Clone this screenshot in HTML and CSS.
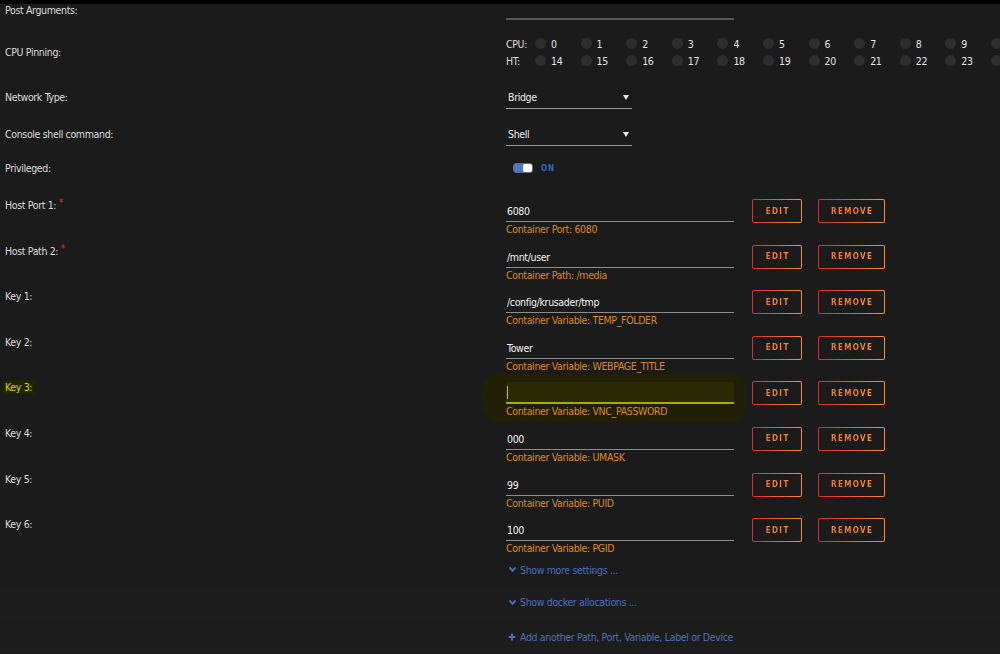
FILE: index.html
```html
<!DOCTYPE html>
<html lang="en">
<head>
    <meta charset="UTF-8">
    <meta name="viewport" content="width=device-width, initial-scale=1.0">
    <title>Container Settings</title>
    <link rel="stylesheet" href="styles.css">
</head>
<body>
    <div class="topbar"></div>
    <form class="settings">
        <div class="row row-post">
            <div class="label">Post Arguments:</div>
            <div class="field wide"><div class="post-input"></div></div>
        </div>

        <div class="row row-cpu">
            <div class="label">CPU Pinning:</div>
            <div class="field wide">
                <div class="cpu-line">
                    <span class="cpu-tag">CPU:</span>
                    <span class="core"><i></i>0</span><span class="core"><i></i>1</span><span class="core"><i></i>2</span><span class="core"><i></i>3</span><span class="core"><i></i>4</span><span class="core"><i></i>5</span><span class="core"><i></i>6</span><span class="core"><i></i>7</span><span class="core"><i></i>8</span><span class="core"><i></i>9</span><span class="core"><i></i></span>
                </div>
                <div class="cpu-line">
                    <span class="cpu-tag">HT:</span>
                    <span class="core"><i></i>14</span><span class="core"><i></i>15</span><span class="core"><i></i>16</span><span class="core"><i></i>17</span><span class="core"><i></i>18</span><span class="core"><i></i>19</span><span class="core"><i></i>20</span><span class="core"><i></i>21</span><span class="core"><i></i>22</span><span class="core"><i></i>23</span><span class="core"><i></i></span>
                </div>
            </div>
        </div>

        <div class="row row-select row-network">
            <div class="label">Network Type:</div>
            <div class="field wide"><div class="select">Bridge<span class="caret"></span></div></div>
        </div>

        <div class="row row-select row-console">
            <div class="label">Console shell command:</div>
            <div class="field wide"><div class="select">Shell<span class="caret"></span></div></div>
        </div>

        <div class="row row-priv">
            <div class="label">Privileged:</div>
            <div class="field wide toggle-wrap">
                <span class="toggle"><span class="knob"></span></span>
                <span class="toggle-text">ON</span>
            </div>
        </div>

        <div class="row row-key first-key">
            <div class="label">Host Port 1: <sup>*</sup></div>
            <div class="field"><div class="text-input">6080</div><div class="hint">Container Port: 6080</div></div>
            <button type="button" class="btn btn-edit"><span>EDIT</span></button>
            <button type="button" class="btn btn-remove"><span>REMOVE</span></button>
        </div>

        <div class="row row-key">
            <div class="label">Host Path 2: <sup>*</sup></div>
            <div class="field"><div class="text-input">/mnt/user</div><div class="hint">Container Path: /media</div></div>
            <button type="button" class="btn btn-edit"><span>EDIT</span></button>
            <button type="button" class="btn btn-remove"><span>REMOVE</span></button>
        </div>

        <div class="row row-key">
            <div class="label">Key 1:</div>
            <div class="field"><div class="text-input">/config/krusader/tmp</div><div class="hint">Container Variable: TEMP_FOLDER</div></div>
            <button type="button" class="btn btn-edit"><span>EDIT</span></button>
            <button type="button" class="btn btn-remove"><span>REMOVE</span></button>
        </div>

        <div class="row row-key">
            <div class="label">Key 2:</div>
            <div class="field"><div class="text-input">Tower</div><div class="hint">Container Variable: WEBPAGE_TITLE</div></div>
            <button type="button" class="btn btn-edit"><span>EDIT</span></button>
            <button type="button" class="btn btn-remove"><span>REMOVE</span></button>
        </div>

        <div class="row row-key marked">
            <div class="label"><span class="mark-label">Key 3:</span></div>
            <div class="field"><div class="text-input focused"><span class="cursor"></span></div><div class="hint">Container Variable: VNC_PASSWORD</div></div>
            <button type="button" class="btn btn-edit"><span>EDIT</span></button>
            <button type="button" class="btn btn-remove"><span>REMOVE</span></button>
        </div>

        <div class="row row-key">
            <div class="label">Key 4:</div>
            <div class="field"><div class="text-input">000</div><div class="hint">Container Variable: UMASK</div></div>
            <button type="button" class="btn btn-edit"><span>EDIT</span></button>
            <button type="button" class="btn btn-remove"><span>REMOVE</span></button>
        </div>

        <div class="row row-key">
            <div class="label">Key 5:</div>
            <div class="field"><div class="text-input">99</div><div class="hint">Container Variable: PUID</div></div>
            <button type="button" class="btn btn-edit"><span>EDIT</span></button>
            <button type="button" class="btn btn-remove"><span>REMOVE</span></button>
        </div>

        <div class="row row-key">
            <div class="label">Key 6:</div>
            <div class="field"><div class="text-input">100</div><div class="hint">Container Variable: PGID</div></div>
            <button type="button" class="btn btn-edit"><span>EDIT</span></button>
            <button type="button" class="btn btn-remove"><span>REMOVE</span></button>
        </div>

        <div class="row row-link row-more">
            <div class="label"></div>
            <a class="link wide">
                <svg class="chev" viewBox="0 0 10 8" width="9" height="7"><polyline points="1.5,1.5 5,5.5 8.5,1.5" fill="none" stroke="currentColor" stroke-width="2.2"/></svg>Show more settings ...
            </a>
        </div>
    </form>

    <div class="band band-docker">
        <a class="link">
            <svg class="chev" viewBox="0 0 10 8" width="9" height="7"><polyline points="1.5,1.5 5,5.5 8.5,1.5" fill="none" stroke="currentColor" stroke-width="2.2"/></svg>Show docker allocations ...
        </a>
    </div>
    <div class="band band-add">
        <a class="link">
            <svg class="plus" viewBox="0 0 8 8" width="8" height="8"><path d="M4 0.5v7M0.5 4h7" stroke="currentColor" stroke-width="2"/></svg>Add another Path, Port, Variable, Label or Device
        </a>
    </div>
</body>
</html>
```

FILE: styles.css
```css
body {
    margin: 0;
    background-color: #1b1b1b;
    color: #dcdcdc;
    font-family: "DejaVu Sans Condensed", "Liberation Sans", sans-serif;
    font-size: 10.5px;
    letter-spacing: -0.35px;
    overflow: hidden;
    height: 654px;
}

.topbar {
    height: 4px;
    background-color: #000;
}

.row {
    display: grid;
    grid-template-columns: 501px 228px 18px 50px 16px 67px;
    padding-left: 5px;
    align-items: start;
}

.field.wide,
.link.wide {
    grid-column: 2 / -1;
}

.label {
    line-height: 14px;
    white-space: nowrap;
}

.label sup {
    color: #e22828;
    font-size: 10px;
    vertical-align: 3px;
    line-height: 0;
}

/* post arguments */
.row-post {
    height: 31px;
}

.row-post .label {
    line-height: 12px;
}

.post-input {
    width: 228px;
    height: 14px;
    border-bottom: 2px solid #585858;
}

/* cpu pinning */
.row-cpu {
    height: 34px;
    align-items: center;
}

.cpu-line {
    display: flex;
    align-items: center;
    height: 17px;
    white-space: nowrap;
}

.cpu-tag {
    width: 29px;
    flex: none;
}

.core {
    display: flex;
    align-items: center;
    gap: 5px;
    width: 45.6px;
    flex: none;
    color: #e4e4e4;
}

.core i {
    width: 11px;
    height: 11px;
    border-radius: 50%;
    background-color: #2e2e2e;
}

/* selects */
.row-select {
    height: 23px;
}

.row-select .label {
    line-height: 22px;
}

.row-network {
    margin-top: 17px;
}

.row-console {
    margin-top: 14px;
}

.select {
    display: flex;
    justify-content: space-between;
    align-items: center;
    width: 121px;
    height: 22px;
    padding: 0 3px 0 2px;
    border-bottom: 1px solid #9a9a9a;
    color: #ececec;
}

.caret {
    width: 0;
    height: 0;
    border-left: 3px solid transparent;
    border-right: 3px solid transparent;
    border-top: 5px solid #e8e8e8;
}

/* privileged toggle */
.row-priv {
    margin-top: 11px;
    height: 22px;
}

.row-priv .label {
    line-height: 22px;
}

.toggle-wrap {
    display: flex;
    align-items: center;
    height: 22px;
    padding-left: 7px;
}

.toggle {
    display: flex;
    justify-content: flex-end;
    width: 20px;
    height: 10px;
    box-sizing: border-box;
    border: 1px solid #6a6a6a;
    border-radius: 3px;
    background-color: #4b76c8;
}

.knob {
    width: 9px;
    height: 8px;
    border-radius: 2px;
    background-color: #fff;
}

.toggle-text {
    margin-left: 8px;
    color: #2b6fb8;
    font-size: 8px;
    font-weight: bold;
    letter-spacing: 0.8px;
}

/* key rows */
.row-key {
    height: 45.6px;
}

.first-key {
    margin-top: 15px;
}

.row-key .label {
    padding-top: 4px;
}

.text-input {
    height: 21px;
    margin-top: 6px;
    padding-left: 1px;
    line-height: 23px;
    border-bottom: 1px solid #8c8c8c;
    color: #f2f2f2;
}

.hint {
    line-height: 15px;
    color: #df8818;
}

.btn {
    height: 24px;
    margin-top: 5px;
    padding: 0;
    border: 1px solid transparent;
    border-radius: 2px;
    background: linear-gradient(#1b1b1b, #1b1b1b) padding-box,
                linear-gradient(90deg, #e22828, #ff8c2f) border-box;
    font-family: inherit;
    font-size: 8px;
    font-weight: bold;
    letter-spacing: 1.4px;
    cursor: pointer;
}

.btn span {
    background: linear-gradient(90deg, #ee742a, #ff8c2f);
    -webkit-background-clip: text;
    background-clip: text;
    color: transparent;
    padding-left: 1.4px;
}

.btn-edit {
    grid-column: 4;
}

.btn-remove {
    grid-column: 6;
}

/* highlighted key 3 */
.mark-label {
    background-color: #232300;
    color: #d7d700;
    padding: 1px 2px;
    margin-left: -2px;
}

.marked .field {
    position: relative;
}

.marked .field::before {
    content: "";
    position: absolute;
    top: -2px;
    bottom: -3px;
    left: -23px;
    right: -11px;
    border-radius: 14px 10px 12px 18px;
    background-color: #202006;
    z-index: -1;
}

.text-input.focused {
    position: relative;
    background-color: #2a2a04;
    border-bottom: 2px solid #aaaa00;
    height: 20px;
}

.cursor {
    position: absolute;
    left: 1px;
    top: 4px;
    width: 1px;
    height: 13px;
    background-color: #c8c800;
}

/* links */
.link {
    display: flex;
    align-items: center;
    gap: 3px;
    color: #4a6ebd;
    line-height: 14px;
    white-space: nowrap;
}

.chev {
    margin-left: 2px;
}

.plus {
    margin-left: 2px;
    margin-right: 1px;
}

.row-more {
    padding-top: 4px;
    height: 22px;
}

.band {
    padding-left: 506px;
    display: flex;
    align-items: center;
}

.band-docker {
    height: 35px;
    background-color: #1d1d1d;
}

.band-add {
    margin-top: 4px;
    height: 26px;
    background-color: #1d1d1d;
}
```
